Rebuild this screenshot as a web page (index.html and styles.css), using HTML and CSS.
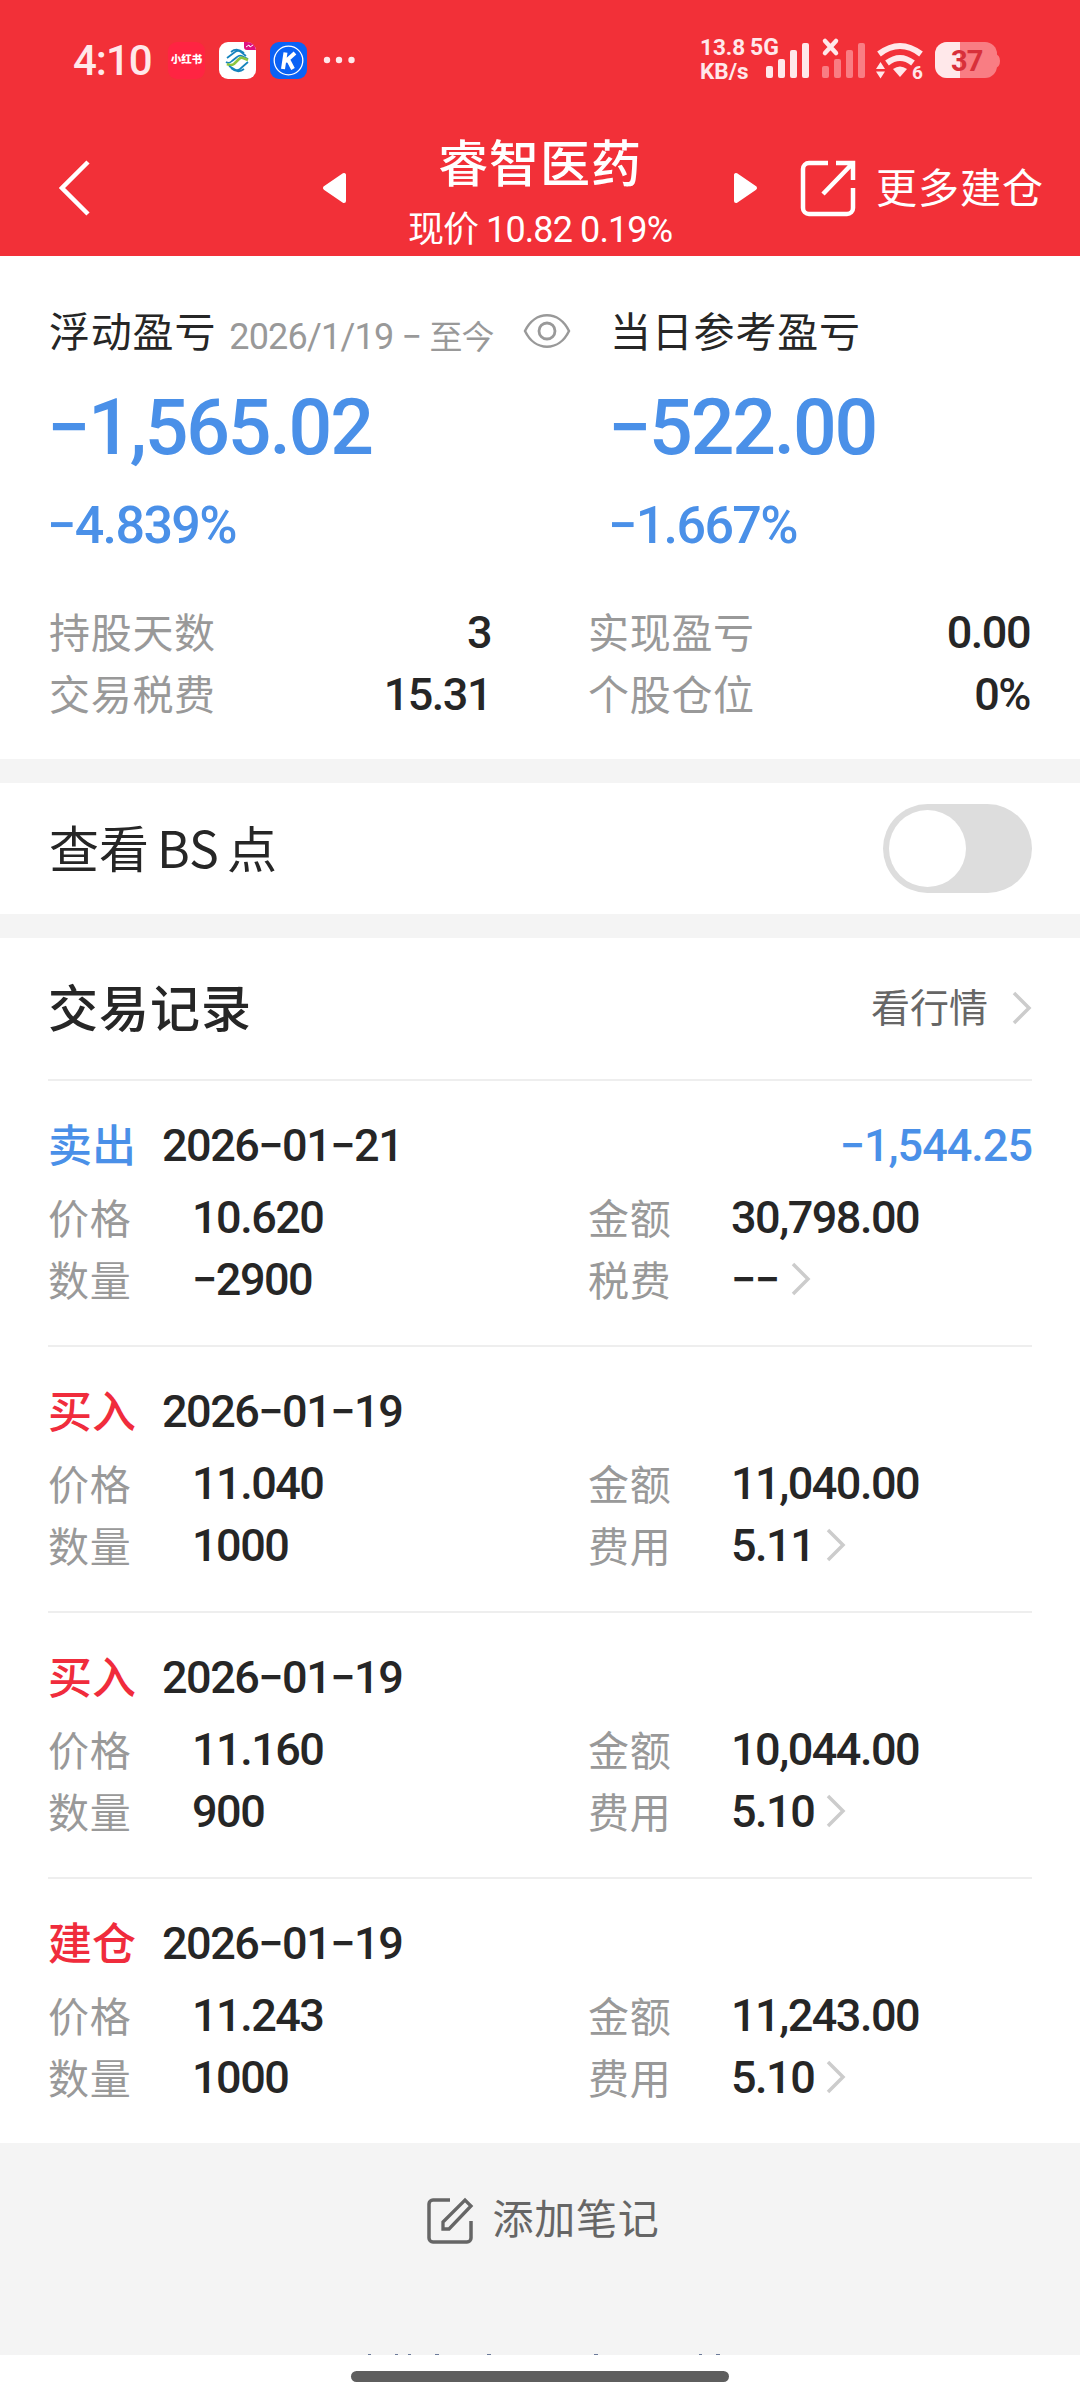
FILE: index.html
```html
<!DOCTYPE html>
<html lang="zh-CN">
<head>
    <meta charset="UTF-8">
    <meta name="viewport" content="width=device-width, initial-scale=1.0">
    <title>睿智医药</title>
    <link rel="stylesheet" href="styles.css">
</head>
<body>
    <header>
        <div class="status-bar">
            <span class="clock">4:10</span>
            <span class="app-icon app-red">小红书</span>
            <svg class="app-icon" width="37" height="37" viewBox="0 0 37 37">
                <rect width="37" height="37" rx="9" fill="#fff"/>
                <path d="M25 0h3a9 9 0 0 1 9 8H28a3 3 0 0 1-3-3z" fill="#e0117f"/>
                <path d="M27 5l3-2 1 2 3-2" fill="none" stroke="#fff" stroke-width="1"/>
                <g fill="none" stroke-width="1.700">
                    <path d="M8 16l8-6q3-2 6 0l5 4M12 10q6-5 13 1" stroke="#1583bd"/>
                    <path d="M7 20q3 2 6-1l5-4q2-2 5-1l6 3" stroke="#1583bd"/>
                    <path d="M8 22q4 2 7 0l5-5q2-2 4-1l5 2" stroke="#8cc63f" stroke-width="2.600"/>
                    <path d="M29 20l-8 7q-3 2-6 0l-5-3M25 27q-6 5-13-1" stroke="#1583bd"/>
                </g>
            </svg>
            <svg class="app-icon" width="37" height="37" viewBox="0 0 37 37">
                <rect width="37" height="37" rx="9" fill="#0a62f5"/>
                <circle cx="18.500" cy="18.500" r="14.300" fill="none" stroke="#fff" stroke-width="1.300"/>
                <path d="M15.500 10.500L13 27M25 11l-9.500 8.500M18 17.500l5 9.500" fill="none" stroke="#fff" stroke-width="4"/>
            </svg>
            <svg class="more" width="32" height="8" viewBox="0 0 32 8">
                <circle cx="4" cy="4" r="3.200"/><circle cx="16" cy="4" r="3.200"/><circle cx="28.500" cy="4" r="3.200"/>
            </svg>
            <div class="net-speed"><span>13.8</span><span>KB/s</span></div>
            <svg class="signals" width="250" height="66" viewBox="750 27 250 66">
                <text x="750" y="55" class="net-type">5G</text>
                <g fill="#ffe8ea">
                    <rect x="766" y="66" width="7" height="12" rx="2"/>
                    <rect x="778" y="59" width="7" height="19" rx="2"/>
                    <rect x="790" y="50" width="7" height="28" rx="2"/>
                    <rect x="802" y="43" width="7" height="35" rx="2"/>
                </g>
                <g fill="#f97d83">
                    <rect x="822" y="66" width="7" height="12" rx="2"/>
                    <rect x="834" y="59" width="7" height="19" rx="2"/>
                    <rect x="846" y="50" width="7" height="28" rx="2"/>
                    <rect x="858" y="43" width="7" height="35" rx="2"/>
                </g>
                <path d="M825 41l11 12M836 41l-11 12" stroke="#ffe8ea" stroke-width="4.500" stroke-linecap="round"/>
                <g fill="none" stroke="#ffe8ea" stroke-width="6">
                    <path d="M879 54q21-16 42 0"/>
                    <path d="M887 63q13-10 26 0"/>
                </g>
                <path d="M893 69q7-5 14 0l-7 8z" fill="#ffe8ea"/>
                <path d="M876 69l4.500-7 4.500 7zM876 71.500l4.500 7 4.500-7z" fill="#ffe8ea"/>
                <text x="912" y="79" class="wifi-gen">6</text>
                <path d="M994 54h1q5 1 5 7t-5 7h-1z" fill="#f97d83"/>
                <rect x="935" y="42" width="62" height="36" rx="12" fill="#f97d83"/>
                <path d="M960 42h-13a12 12 0 0 0-12 12v12a12 12 0 0 0 12 12h13z" fill="#ffe8ea"/>
                <text x="951" y="71" class="battery-text">37</text>
            </svg>
        </div>
        <div class="nav-bar">
            <svg class="back" width="32" height="58" viewBox="0 0 32 58">
                <path d="M29 3L3 29l26 26" fill="none" stroke="#fff" stroke-width="4.500"/>
            </svg>
            <svg class="prev" width="26" height="32" viewBox="0 0 26 32">
                <path d="M3 16L22 3v26z" fill="#fff" stroke="#fff" stroke-width="4" stroke-linejoin="round"/>
            </svg>
            <div class="stock">
                <h1>睿智医药</h1>
                <p>现价 10.82 0.19%</p>
            </div>
            <svg class="next" width="26" height="32" viewBox="0 0 26 32">
                <path d="M23 16L4 3v26z" fill="#fff" stroke="#fff" stroke-width="4" stroke-linejoin="round"/>
            </svg>
            <svg class="share" width="56" height="58" viewBox="0 0 56 58">
                <path d="M28 4H9a6 6 0 0 0-6 6v39a6 6 0 0 0 6 6h38a6 6 0 0 0 6-6V29M36 4h17v17M52 5L23 35" fill="none" stroke="#fff" stroke-width="4.500"/>
            </svg>
            <span class="more-positions">更多建仓</span>
        </div>
    </header>

    <section class="summary">
        <div class="profit">
            <div class="profit-title">
                <span>浮动盈亏</span>
                <span class="period">2026/1/19 − <i>至今</i></span>
                <svg class="eye" width="48" height="36" viewBox="0 0 48 36">
                    <path d="M2 18C12-3 36-3 46 18C36 39 12 39 2 18z" fill="none" stroke="#999" stroke-width="2.500"/>
                    <circle cx="24" cy="18" r="8" fill="none" stroke="#999" stroke-width="2.800"/>
                </svg>
            </div>
            <div class="profit-value">−1,565.02</div>
            <div class="profit-rate">−4.839%</div>
        </div>
        <div class="profit">
            <div class="profit-title"><span>当日参考盈亏</span></div>
            <div class="profit-value">−522.00</div>
            <div class="profit-rate">−1.667%</div>
        </div>
        <dl class="facts">
            <div><dt>持股天数</dt><dd>3</dd></div>
            <div><dt>实现盈亏</dt><dd>0.00</dd></div>
            <div><dt>交易税费</dt><dd>15.31</dd></div>
            <div><dt>个股仓位</dt><dd>0%</dd></div>
        </dl>
    </section>

    <section class="bs-row">
        <span>查看<b>BS</b>点</span>
        <div class="switch"></div>
    </section>

    <section class="records">
        <div class="records-head">
            <h2>交易记录</h2>
            <span class="quote">看行情</span>
            <svg class="arrow" width="20" height="34" viewBox="0 0 20 34"><path d="M2 2l15 15L2 32"/></svg>
        </div>

        <article class="record">
            <div class="record-head"><span class="sell">卖出</span><time>2026−01−21</time><span class="gain">−1,544.25</span></div>
            <div class="record-grid">
                <span>价格</span><b>10.620</b><span>金额</span><b>30,798.00</b>
                <span>数量</span><b>−2900</b><span>税费</span>
                <b>−−<svg class="arrow" width="20" height="34" viewBox="0 0 20 34"><path d="M2 2l15 15L2 32"/></svg></b>
            </div>
        </article>

        <article class="record">
            <div class="record-head"><span class="buy">买入</span><time>2026−01−19</time></div>
            <div class="record-grid">
                <span>价格</span><b>11.040</b><span>金额</span><b>11,040.00</b>
                <span>数量</span><b>1000</b><span>费用</span>
                <b>5.11<svg class="arrow" width="20" height="34" viewBox="0 0 20 34"><path d="M2 2l15 15L2 32"/></svg></b>
            </div>
        </article>

        <article class="record">
            <div class="record-head"><span class="buy">买入</span><time>2026−01−19</time></div>
            <div class="record-grid">
                <span>价格</span><b>11.160</b><span>金额</span><b>10,044.00</b>
                <span>数量</span><b>900</b><span>费用</span>
                <b>5.10<svg class="arrow" width="20" height="34" viewBox="0 0 20 34"><path d="M2 2l15 15L2 32"/></svg></b>
            </div>
        </article>

        <article class="record">
            <div class="record-head"><span class="buy">建仓</span><time>2026−01−19</time></div>
            <div class="record-grid">
                <span>价格</span><b>11.243</b><span>金额</span><b>11,243.00</b>
                <span>数量</span><b>1000</b><span>费用</span>
                <b>5.10<svg class="arrow" width="20" height="34" viewBox="0 0 20 34"><path d="M2 2l15 15L2 32"/></svg></b>
            </div>
        </article>
    </section>

    <section class="note">
        <div class="add-note">
            <svg width="48" height="48" viewBox="0 0 48 48">
                <path d="M24 3H7a4 4 0 0 0-4 4v34a4 4 0 0 0 4 4h34a4 4 0 0 0 4-4V24" fill="none" stroke="#666" stroke-width="3.500"/>
                <path d="M17 32v-7L39 3l6 6-22 23z" fill="none" stroke="#666" stroke-width="3.300"/>
            </svg>
            <span>添加笔记</span>
        </div>
        <svg width="360" height="1" viewBox="360 0 360 1">
            <path d="M368 .5h3M395 .5h3M408 .5h3M435 .5h4M487 .5h4M594 .5h4M699 .5h3M716 .5h4" stroke="#6b7a99" stroke-width="1"/>
        </svg>
    </section>
    <footer><div class="home-bar"></div></footer>
</body>
</html>
```
FILE: styles.css
```css
* {
    box-sizing: border-box;
}
body {
    margin: 0;
    width: 1080px;
    height: 2400px;
    overflow: hidden;
    font-family: Roboto, "Noto Sans CJK SC", sans-serif;
    background-color: #fff;
    color: #262626;
}
svg {
    flex: none;
    display: block;
}
h1, h2, p, dl, dd {
    margin: 0;
}
header {
    height: 256px;
    background-color: #f23038;
    color: #fff;
}
.status-bar {
    display: flex;
    align-items: center;
    height: 120px;
    padding-left: 73px;
}
.clock {
    width: 95px;
    font-size: 42px;
    font-weight: 500;
    letter-spacing: -1px;
    color: #ffe8ea;
}
.app-icon {
    flex: none;
    width: 37px;
    height: 37px;
    margin-right: 14px;
}
.app-red {
    border-radius: 9px;
    background-color: #ff2442;
    font-size: 10.500px;
    font-weight: 900;
    line-height: 36px;
    text-align: center;
    color: #fff;
}
.more {
    margin-left: 2px;
    fill: #ffe8ea;
}
.net-speed {
    display: flex;
    flex-direction: column;
    width: 50px;
    margin-left: 345px;
    padding-bottom: 3px;
    font-size: 22.500px;
    font-weight: 700;
    line-height: 24px;
    color: #ffe8ea;
}
.net-type {
    font-size: 23px;
    font-weight: 700;
    fill: #ffe8ea;
}
.wifi-gen {
    font-size: 19px;
    font-weight: 700;
    fill: #ffe8ea;
}
.battery-text {
    font-size: 29px;
    font-weight: 700;
    letter-spacing: -1px;
    fill: #d8303a;
}
.nav-bar {
    display: flex;
    align-items: center;
    height: 136px;
    padding-left: 59px;
}
.prev {
    margin-left: 231px;
}
.stock {
    width: 384px;
    padding-top: 22px;
    text-align: center;
}
.stock h1 {
    font-size: 50px;
    font-weight: 500;
    line-height: 62px;
    letter-spacing: 1px;
}
.stock p {
    font-size: 36px;
    line-height: 68px;
    letter-spacing: -0.900px;
    white-space: nowrap;
}
.share {
    margin-left: 42px;
}
.more-positions {
    margin-left: 20px;
    padding-bottom: 6px;
    font-size: 41px;
    letter-spacing: 1px;
    white-space: nowrap;
}
.summary {
    display: grid;
    grid-template-columns: 561px 1fr;
    height: 503px;
    padding: 43px 48px 0 49px;
    align-content: start;
}
.profit-title {
    display: flex;
    align-items: center;
    height: 60px;
    font-size: 41px;
    letter-spacing: 0.8px;
    white-space: nowrap;
}
.eye {
    margin-top: 4px;
}
.period {
    margin-left: 13px;
    padding-top: 12px;
    width: 294px;
    font-size: 36px;
    letter-spacing: -0.800px;
    color: #999;
}
.period i {
    font-size: 33px;
    font-style: normal;
}
.profit-value {
    height: 136px;
    line-height: 138px;
    margin-left: -2px;
    font-size: 77px;
    font-weight: 500;
    letter-spacing: -2.200px;
    color: #4a90e8;
}
.profit-rate {
    height: 65px;
    line-height: 61px;
    margin-left: -2px;
    font-size: 52px;
    font-weight: 500;
    letter-spacing: -1.600px;
    color: #4a90e8;
}
.facts {
    grid-column: 1 / 3;
    display: grid;
    grid-template-columns: 442px 442px;
    column-gap: 97px;
    grid-auto-rows: 62px;
    margin-top: 41px;
}
.facts div {
    display: flex;
    justify-content: space-between;
    align-items: center;
}
.facts dt {
    padding-bottom: 4px;
    font-size: 41px;
    letter-spacing: 0.7px;
    color: #999;
}
.facts dd {
    font-size: 45px;
    font-weight: 500;
    letter-spacing: -1.500px;
}
.bs-row {
    display: flex;
    align-items: center;
    justify-content: space-between;
    height: 179px;
    padding: 0 48px 0 49px;
    border-top: 24px solid #f4f4f4;
    border-bottom: 24px solid #f4f4f4;
    font-size: 50px;
}
.bs-row span {
    padding-bottom: 6px;
}
.bs-row b {
    margin: 0 8px;
    font-family: "Noto Sans CJK SC", sans-serif;
    font-weight: 400;
}
.switch {
    width: 149px;
    height: 89px;
    padding: 6px;
    border-radius: 45px;
    background-color: #ddd;
}
.switch::before {
    content: "";
    display: block;
    width: 77px;
    height: 77px;
    border-radius: 50%;
    background-color: #fff;
}
.records {
    padding: 0 48px;
}
.records-head {
    display: flex;
    align-items: center;
    height: 141px;
    padding-bottom: 2px;
}
.records-head h2 {
    flex: 1;
    padding-bottom: 6px;
    font-size: 50px;
    font-weight: 500;
    letter-spacing: 1px;
}
.quote {
    margin-right: 24px;
    padding-bottom: 5px;
    font-size: 39px;
    color: #666;
}
.arrow path {
    fill: none;
    stroke: #ccc;
    stroke-width: 3.500;
}
.record {
    height: 266px;
    padding-top: 36px;
    border-top: 2px solid #eee;
}
.record-head {
    display: flex;
    align-items: center;
    height: 56px;
    font-size: 45px;
}
.record-head time {
    margin-left: 24px;
    font-weight: 500;
    letter-spacing: -1.500px;
}
.sell, .gain {
    color: #4a90e8;
}
.sell, .buy {
    width: 90px;
    padding-bottom: 4px;
    font-size: 44px;
    font-weight: 500;
    white-space: nowrap;
}
.buy {
    color: #f02c3c;
}
.gain {
    margin-left: auto;
    font-weight: 500;
    letter-spacing: -1px;
}
.record-grid {
    display: grid;
    grid-template-columns: 144px 396px 143px 1fr;
    grid-auto-rows: 62px;
    align-items: center;
    padding-top: 13px;
}
.record-grid span {
    padding-bottom: 3px;
    font-size: 41px;
    letter-spacing: 0.7px;
    color: #999;
}
.record-grid b {
    display: flex;
    align-items: center;
    font-size: 45px;
    font-weight: 500;
    letter-spacing: -1.500px;
}
.record-grid .arrow {
    margin-left: 12px;
}
.note {
    display: flex;
    flex-direction: column;
    align-items: center;
    justify-content: space-between;
    height: 212px;
    padding-top: 54px;
    background-color: #f4f4f4;
}
.add-note {
    display: flex;
    padding-left: 5px;
    font-size: 41px;
    line-height: 46px;
    letter-spacing: 0.7px;
    color: #666;
}
.add-note span {
    margin-left: 19px;
}
footer {
    padding-top: 16px;
}
.home-bar {
    width: 378px;
    height: 11px;
    margin: 0 auto;
    border-radius: 6px;
    background-color: #5e5e5e;
}
```
